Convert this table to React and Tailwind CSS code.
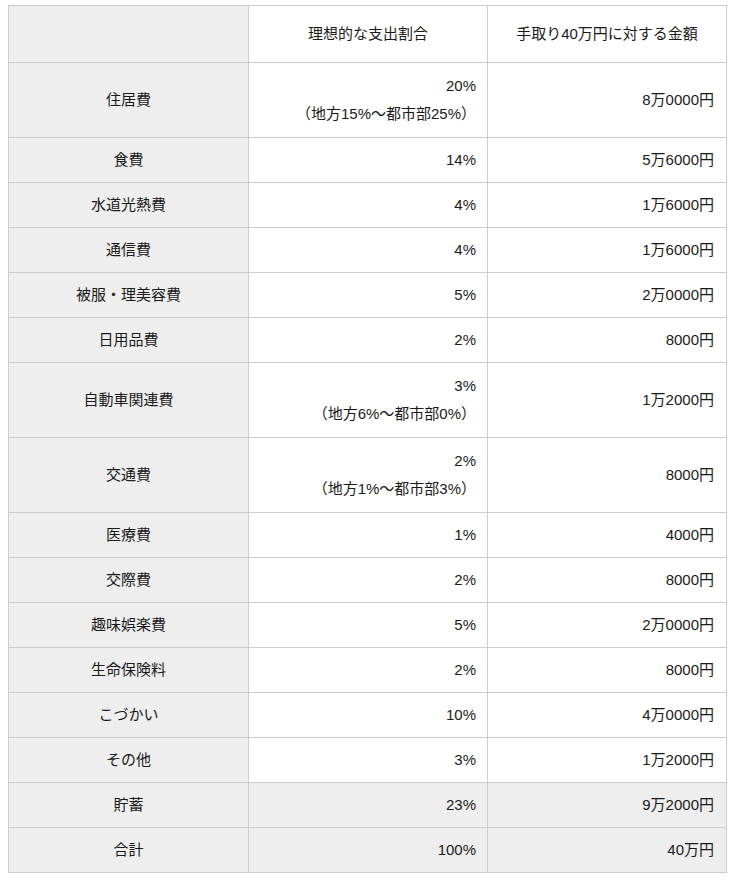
import React from "react";

const rows = [
  { name: "住居費", pct: "20%", note: "（地方15%～都市部25%）", amt: "8万0000円" },
  { name: "食費", pct: "14%", amt: "5万6000円" },
  { name: "水道光熱費", pct: "4%", amt: "1万6000円" },
  { name: "通信費", pct: "4%", amt: "1万6000円" },
  { name: "被服・理美容費", pct: "5%", amt: "2万0000円" },
  { name: "日用品費", pct: "2%", amt: "8000円" },
  { name: "自動車関連費", pct: "3%", note: "（地方6%～都市部0%）", amt: "1万2000円" },
  { name: "交通費", pct: "2%", note: "（地方1%～都市部3%）", amt: "8000円" },
  { name: "医療費", pct: "1%", amt: "4000円" },
  { name: "交際費", pct: "2%", amt: "8000円" },
  { name: "趣味娯楽費", pct: "5%", amt: "2万0000円" },
  { name: "生命保険料", pct: "2%", amt: "8000円" },
  { name: "こづかい", pct: "10%", amt: "4万0000円" },
  { name: "その他", pct: "3%", amt: "1万2000円" },
  { name: "貯蓄", pct: "23%", amt: "9万2000円", gray: true },
  { name: "合計", pct: "100%", amt: "40万円", gray: true },
];

export default function App() {
  return (
    <div
      className="bg-white w-[735px] h-[880px] pt-[5px] pl-[8px] text-[#1a1a1a] text-[15px]"
      style={{ fontFamily: '"Liberation Sans", "Noto Sans CJK JP", sans-serif' }}
    >
      <table className="border-collapse table-fixed w-[718px]">
        <colgroup>
          <col className="w-[240px]" />
          <col className="w-[239px]" />
          <col className="w-[239px]" />
        </colgroup>
        <tbody>
          <tr className="h-[57px]">
            <td className="border border-[#cccccc] bg-[#eeeeee]"></td>
            <td className="border border-[#cccccc] text-center leading-[28px]">理想的な支出割合</td>
            <td className="border border-[#cccccc] text-center leading-[28px]">手取り40万円に対する金額</td>
          </tr>
          {rows.map((r) => (
            <tr key={r.name} className={r.note ? "h-[75px]" : "h-[45px]"}>
              <td className="border border-[#cccccc] bg-[#eeeeee] text-center leading-[28px] p-0">{r.name}</td>
              <td className={`border border-[#cccccc] text-right pr-[11px] leading-[28px] p-0 ${r.gray ? "bg-[#eeeeee]" : "bg-white"}`}>
                <div>{r.pct}</div>
                {r.note && <div>{r.note}</div>}
              </td>
              <td className={`border border-[#cccccc] text-right pr-[12px] leading-[28px] p-0 ${r.gray ? "bg-[#eeeeee]" : "bg-white"}`}>
                {r.amt}
              </td>
            </tr>
          ))}
        </tbody>
      </table>
    </div>
  );
}
